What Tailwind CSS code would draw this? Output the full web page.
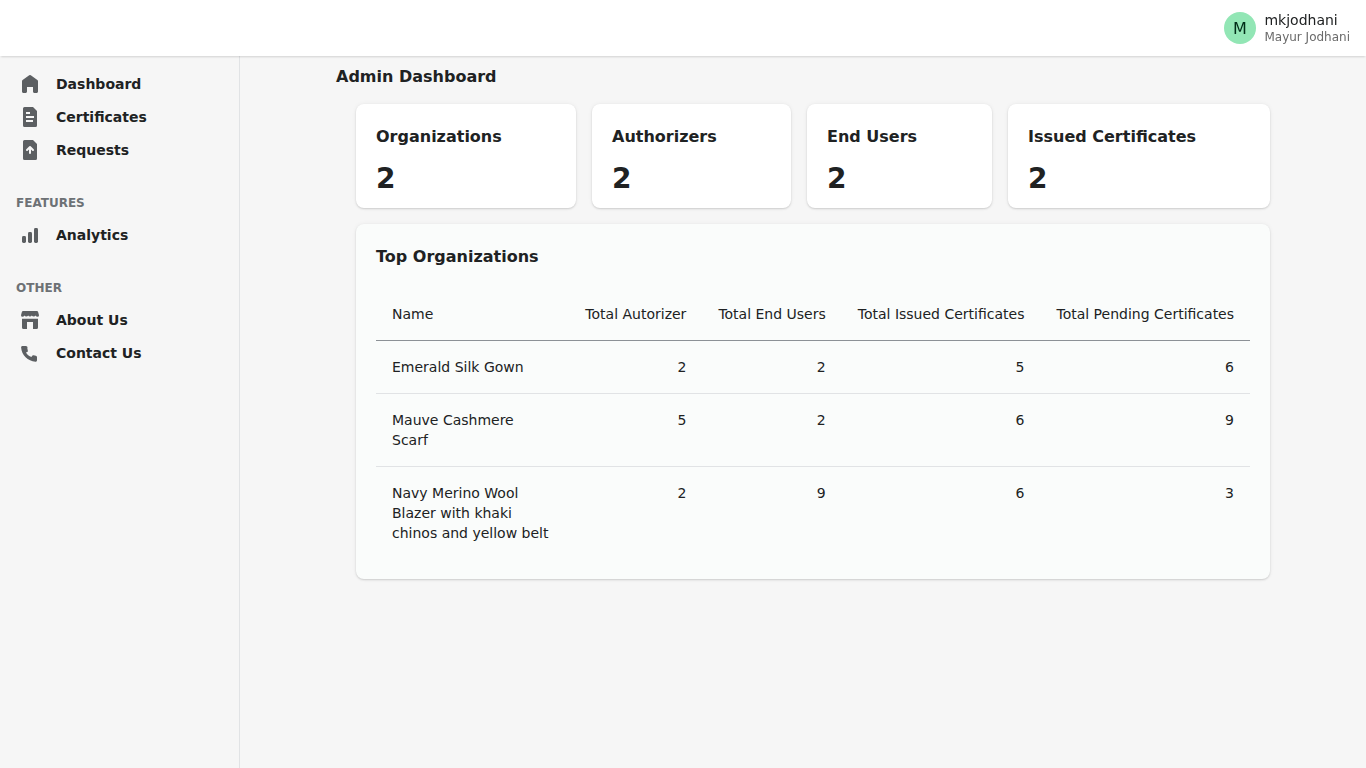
<!DOCTYPE html>
<html lang="en">
<head>
<meta charset="utf-8">
<title>Admin Dashboard</title>
<script src="https://cdn.jsdelivr.net/npm/@tailwindcss/browser@4"></script>
</head>
<body class="h-screen flex flex-col overflow-hidden bg-[#f6f6f6] font-['DejaVu_Sans',sans-serif] text-sm leading-5 text-[#202223]">
<header class="relative z-10 h-14 shrink-0 flex items-center justify-end gap-2 bg-white pr-4 shadow-[0_2px_2px_-1px_rgba(0,0,0,0.15)] will-change-transform">
  <svg class="size-8 rounded-full bg-[#92e6b5]" viewBox="0 0 40 40"><text x="50%" y="50%" dy="0.35em" text-anchor="middle" font-size="20" fill="#002d18">M</text></svg>
  <div>
    <p class="leading-4">mkjodhani</p>
    <p class="pt-px -mb-px text-xs leading-4 text-[#6a6a6a]">Mayur Jodhani</p>
  </div>
</header>
<div class="flex flex-1 min-h-0">
  <nav class="w-60 shrink-0 border-r border-[#e1e3e5] pt-3 font-bold">
    <ul class="fill-[#5c5f62]">
      <li class="flex h-8 mb-px items-center gap-4 pl-5"><svg class="size-5" viewBox="0 0 20 20"><path d="M18 7.261V17.5c0 .841-.672 1.5-1.5 1.5h-2c-.828 0-1.5-.659-1.5-1.5V13H7v4.477C7 18.318 6.328 19 5.5 19h-2c-.828 0-1.5-.682-1.5-1.523V7.261a1.5 1.5 0 0 1 .615-1.21l6.59-4.82a1.481 1.481 0 0 1 1.59 0l6.59 4.82A1.5 1.5 0 0 1 18 7.26z"/></svg>Dashboard</li>
      <li class="flex h-8 mb-px items-center gap-4 pl-5"><svg class="size-5" viewBox="0 0 20 20"><path fill-rule="evenodd" d="M13 0H4.500A1.500 1.500 0 0 0 3 1.500v17A1.500 1.500 0 0 0 4.500 20h11a1.500 1.500 0 0 0 1.500-1.500V4zM6 5h4v2H6zm0 4h8v2H6zm0 4h7v2H6z"/></svg>Certificates</li>
      <li class="flex h-8 items-center gap-4 pl-5"><svg class="size-5" viewBox="0 0 20 20"><path fill-rule="evenodd" d="M13 0H4.500A1.500 1.500 0 0 0 3 1.500v17A1.500 1.500 0 0 0 4.500 20h11a1.500 1.500 0 0 0 1.500-1.500V4zM9.293 6.293a1 1 0 0 1 1.414 0l3 3a1 1 0 0 1-1.414 1.414L11 9.414V13a1 1 0 1 1-2 0V9.414l-1.293 1.293a1 1 0 0 1-1.414-1.414z"/></svg>Requests</li>
    </ul>
    <h3 class="mt-[29px] mb-1.5 h-[18px] pl-4 text-xs leading-4 text-[#6d7175]">FEATURES</h3>
    <ul class="fill-[#5c5f62]">
      <li class="flex h-8 items-center gap-4 pl-5"><svg class="size-5" viewBox="0 0 20 20"><rect x="14" y="3" width="4" height="15" rx="1.400"/><rect x="8" y="7" width="4" height="11" rx="1.400"/><rect x="2" y="11" width="4" height="7" rx="1.400"/></svg>Analytics</li>
    </ul>
    <h3 class="mt-[29px] mb-1.5 h-[18px] pl-4 text-xs leading-4 text-[#6d7175]">OTHER</h3>
    <ul class="fill-[#5c5f62]">
      <li class="flex h-8 mb-px items-center gap-4 pl-5"><svg class="size-5" viewBox="0 0 20 20"><path d="M1.800 2.200A1.500 1.500 0 0 1 3.200 1h13.600a1.500 1.500 0 0 1 1.400 1.200L19 5.200Q19 6.800 17.500 6.800 16.200 6.800 15.600 5.500 15 6.500 13.700 6.500T11.800 5.500Q11.200 6.500 10 6.500T8.200 5.500Q7.600 6.500 6.300 6.500T4.400 5.500Q3.800 6.800 2.500 6.800 1 6.800 1 5.200zM2 8.800h16v8.700a1.500 1.500 0 0 1-1.500 1.500H13v-7H7v7H3.500A1.500 1.500 0 0 1 2 17.500z"/></svg>About Us</li>
      <li class="flex h-8 items-center gap-4 pl-5"><svg class="size-5" viewBox="0 0 20 20"><path d="M7.876 7.976l-.534-2.670A1.500 1.500 0 0 0 7.100 3.600Q6.700 3 5.900 3H2.500C1.670 3 1 3.700 1.100 4.500 1.700 12.300 7.800 18.100 15.500 18.700c.830.060 1.500-.600 1.500-1.500v-3c0-.700-.500-1.330-1.200-1.470l-2.200-.440a1.500 1.500 0 0 0-1.600.800l-.500.980C9 13.100 7.100 11.500 6 9.500l1.100-.540a1 1 0 0 0 .776-.984z"/></svg>Contact Us</li>
    </ul>
  </nav>
  <main class="w-[934px] ml-24 pt-[9px]">
    <h1 class="text-base leading-6 font-bold">Admin Dashboard</h1>
    <div class="pl-5 pt-[15px]">
      <div class="flex gap-4 font-bold">
        <section class="h-[104px] w-[220px] rounded-lg bg-white px-5 pt-[21px] shadow-[0_0_5px_rgba(23,24,24,0.05),0_1px_2px_rgba(0,0,0,0.15)]"><h2 class="text-base leading-6">Organizations</h2><p class="mt-3.5 text-[28px] leading-8">2</p></section>
        <section class="h-[104px] w-[199px] rounded-lg bg-white px-5 pt-[21px] shadow-[0_0_5px_rgba(23,24,24,0.05),0_1px_2px_rgba(0,0,0,0.15)]"><h2 class="text-base leading-6">Authorizers</h2><p class="mt-3.5 text-[28px] leading-8">2</p></section>
        <section class="h-[104px] w-[185px] rounded-lg bg-white px-5 pt-[21px] shadow-[0_0_5px_rgba(23,24,24,0.05),0_1px_2px_rgba(0,0,0,0.15)]"><h2 class="text-base leading-6">End Users</h2><p class="mt-3.5 text-[28px] leading-8">2</p></section>
        <section class="h-[104px] w-[262px] rounded-lg bg-white px-5 pt-[21px] shadow-[0_0_5px_rgba(23,24,24,0.05),0_1px_2px_rgba(0,0,0,0.15)]"><h2 class="text-base leading-6">Issued Certificates</h2><p class="mt-3.5 text-[28px] leading-8">2</p></section>
      </div>
      <section class="mt-4 rounded-lg bg-[#fafcfb] px-5 pb-5 pt-[21px] shadow-[0_0_5px_rgba(23,24,24,0.05),0_1px_2px_rgba(0,0,0,0.15)]">
        <h2 class="text-base leading-6 font-bold">Top Organizations</h2>
        <div class="mt-[19px] grid grid-cols-[193.2px_133.2px_139.2px_198.9px_209.5px] border-b border-[#8c9196] py-4 text-right whitespace-nowrap *:px-4"><div class="text-left">Name</div><div>Total Autorizer</div><div>Total End Users</div><div>Total Issued Certificates</div><div>Total Pending Certificates</div></div>
        <div class="grid grid-cols-[193.2px_133.2px_139.2px_198.9px_209.5px] border-b border-[#e1e3e5] py-4 text-right *:px-4"><div class="text-left">Emerald Silk Gown</div><div>2</div><div>2</div><div>5</div><div>6</div></div>
        <div class="grid grid-cols-[193.2px_133.2px_139.2px_198.9px_209.5px] border-b border-[#e1e3e5] py-4 text-right *:px-4"><div class="text-left">Mauve Cashmere<br>Scarf</div><div>5</div><div>2</div><div>6</div><div>9</div></div>
        <div class="grid grid-cols-[193.2px_133.2px_139.2px_198.9px_209.5px] py-4 text-right *:px-4"><div class="text-left">Navy Merino Wool<br>Blazer with khaki<br>chinos and yellow belt</div><div>2</div><div>9</div><div>6</div><div>3</div></div>
      </section>
    </div>
  </main>
</div>
</body>
</html>
